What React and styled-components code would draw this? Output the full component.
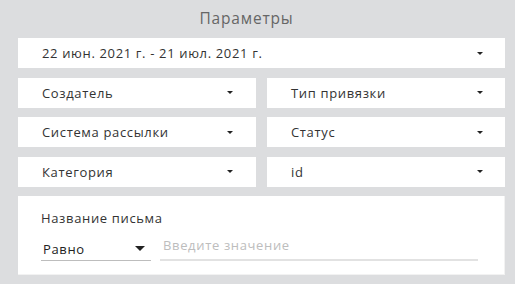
import React from "react";
import styled, { createGlobalStyle } from "styled-components";

const Global = createGlobalStyle`
  html, body { margin: 0; padding: 0; }
  body {
    background: #dcdddf;
    font-family: "Open Sans", "Noto Sans", sans-serif;
    width: 515px;
    height: 284px;
    overflow: hidden;
  }
`;

const Panel = styled.div`
  box-sizing: border-box;
  width: 515px;
  padding: 0 10px 0 18px;
  display: flex;
  flex-direction: column;
`;

const Title = styled.div`
  height: 38px;
  line-height: 36px;
  text-align: center;
  padding-right: 30px;
  font-size: 15.5px;
  color: #666;
  letter-spacing: 0.8px;
`;

const Stack = styled.div`
  display: grid;
  row-gap: 9.5px;
`;

const Pair = styled.div`
  display: grid;
  grid-template-columns: 1fr 1fr;
  column-gap: 11px;
`;

const Box = styled.div`
  height: 30px;
  background: #fff;
  display: flex;
  align-items: center;
  justify-content: space-between;
  padding: 0 ${(p) => (p.$wide ? 22 : 23)}px 0 24px;
  font-size: 13px;
  letter-spacing: 0.65px;
  color: #333;
`;

const Caret = styled.span`
  width: 0;
  height: 0;
  border-left: ${(p) => (p.$big ? 5 : 3)}px solid transparent;
  border-right: ${(p) => (p.$big ? 5 : 3)}px solid transparent;
  border-top: ${(p) => (p.$big ? 5 : 3)}px solid #222;
`;

const Card = styled.div`
  box-sizing: border-box;
  height: 79px;
  background: #fff;
  border-right: 1px solid #f2f2f2;
  border-bottom: 1px solid #f2f2f2;
  padding: 12px 26px 0 23px;
  display: flex;
  flex-direction: column;
`;

const Label = styled.div`
  font-size: 13px;
  letter-spacing: 0.65px;
  color: #333;
  line-height: 20px;
`;

const FilterRow = styled.div`
  display: flex;
  align-items: flex-end;
  gap: 9px;
  margin-top: 7px;
`;

const Op = styled.div`
  box-sizing: border-box;
  width: 110px;
  height: 26px;
  display: flex;
  align-items: center;
  justify-content: space-between;
  padding: 2px 6px 0 2px;
  border-bottom: 1px solid #bdbdbd;
  font-size: 13px;
  letter-spacing: 0.65px;
  color: #222;
`;

const Input = styled.input`
  flex: 1;
  box-sizing: border-box;
  height: 26px;
  border: none;
  border-bottom: 2px solid #e2e2e2;
  outline: none;
  padding: 0 0 4px 3px;
  font-family: inherit;
  font-size: 13px;
  letter-spacing: 0.65px;
  color: #333;
  background: transparent;
  &::placeholder { color: #bdbdbd; }
`;

const selects = [
  ["Создатель", "Тип привязки"],
  ["Система рассылки", "Статус"],
  ["Категория", "id"],
];

export default function App() {
  return (
    <>
      <Global />
      <Panel>
        <Title>Параметры</Title>
        <Stack>
          <Box $wide>
            <span>22 июн. 2021 г. - 21 июл. 2021 г.</span>
            <Caret />
          </Box>
          {selects.map(([a, b]) => (
            <Pair key={a}>
              <Box>
                <span>{a}</span>
                <Caret />
              </Box>
              <Box $wide>
                <span>{b}</span>
                <Caret />
              </Box>
            </Pair>
          ))}
          <Card>
            <Label>Название письма</Label>
            <FilterRow>
              <Op>
                <span>Равно</span>
                <Caret $big />
              </Op>
              <Input placeholder="Введите значение" />
            </FilterRow>
          </Card>
        </Stack>
      </Panel>
    </>
  );
}
